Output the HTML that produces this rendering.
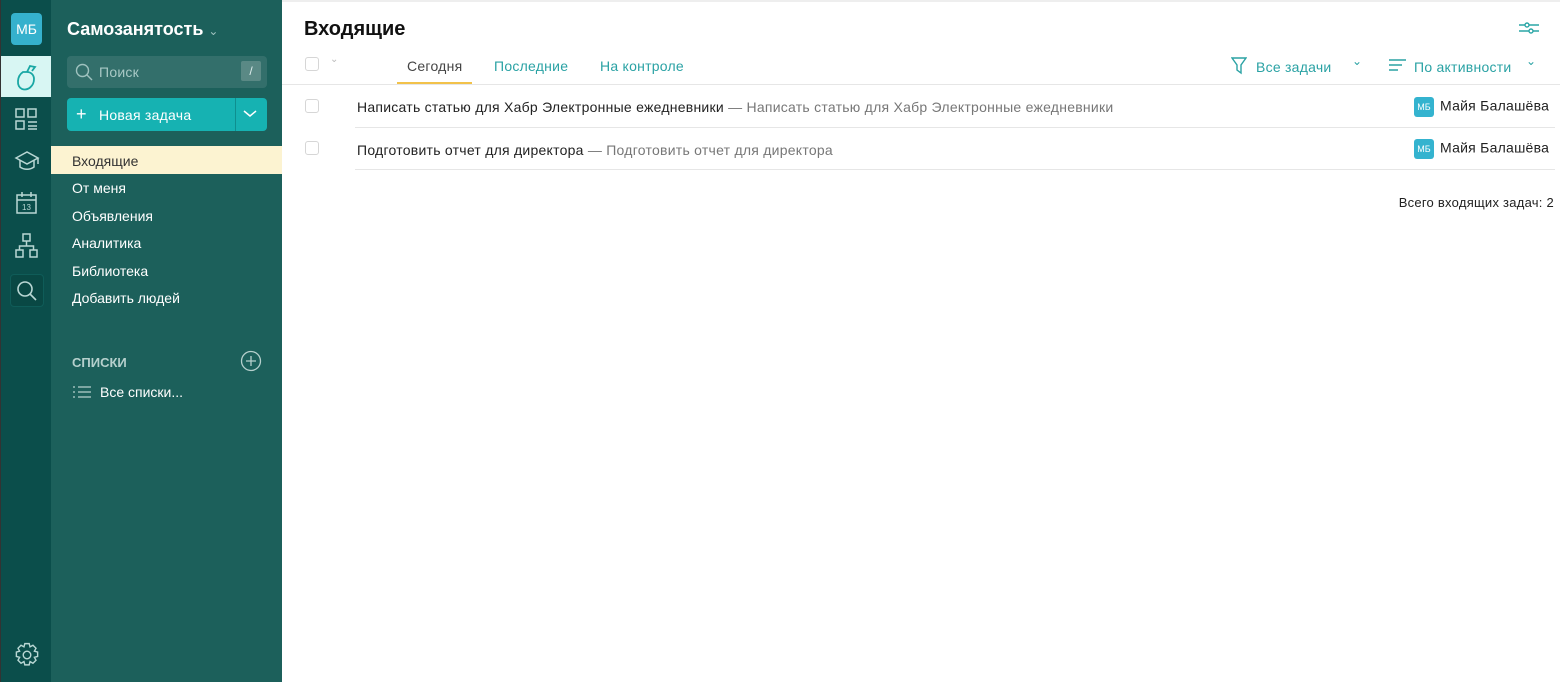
<!DOCTYPE html>
<html><head><meta charset="utf-8"><style>
*{margin:0;padding:0;box-sizing:border-box}
body{width:1560px;height:682px;overflow:hidden;font-family:"Liberation Sans","Noto Sans CJK SC",sans-serif;background:#fff;position:relative}
.rail{position:absolute;left:0;top:0;width:51px;height:682px;background:#0b4e4b;border-left:1px solid #333}
.panel{position:absolute;left:51px;top:0;width:231px;height:682px;background:#1c605b}
.ab{position:absolute}
.nav{position:absolute;left:21px;color:#fff;font-size:14px}
.main{position:absolute;left:282px;top:0;right:0;height:682px;border-top:2px solid #eee}
.cb{position:absolute;width:14px;height:14px;border:1px solid #d6d6d6;border-radius:3px}
.av{display:inline-block;width:20px;height:20px;background:#34b3cf;border-radius:3px;color:#fff;font-size:9px;text-align:center;line-height:20px;vertical-align:middle;margin-right:6px;letter-spacing:0}
.t{letter-spacing:0.25px}
</style></head><body>
<div class="rail">
 <div class="ab" style="left:10px;top:13px;width:31px;height:32px;background:#35b1cd;border-radius:4px;color:#fff;font-size:14px;text-align:center;line-height:32px">МБ</div>
 <div class="ab" style="left:0;top:56px;width:50px;height:41px;background:#d8f6f3"></div>
 <svg class="ab" style="left:13px;top:62px" width="26" height="30" viewBox="0 0 26 30" fill="none" stroke="#1aa7a4" stroke-width="1.8"><path d="M9 10 C3 14 2 24 8 27 C14 29 20 24 20 17 C20 13 17 10 13 10 Z"/><path d="M13 10 L16 4 L21 5 L18 9"/></svg>
 <svg class="ab" style="left:14px;top:108px" width="24" height="22" fill="none" stroke="#b9d7d4" stroke-width="1.5"><rect x="1" y="1" width="8" height="8"/><rect x="13" y="1" width="8" height="8"/><rect x="1" y="13" width="8" height="8"/><path d="M13 14h9M13 18h9M13 21h9"/></svg>
 <svg class="ab" style="left:13px;top:150px" width="26" height="22" fill="none" stroke="#b9d7d4" stroke-width="1.5"><path d="M2 8 L13 2 L24 8 L13 14 Z"/><path d="M6 10v7c4 3 10 3 14 0v-7"/><path d="M24 8v6"/></svg>
 <svg class="ab" style="left:14px;top:191px" width="24" height="24" fill="none" stroke="#b9d7d4" stroke-width="1.5"><rect x="2" y="4" width="19" height="18"/><path d="M2 9h19M7 1v5M16 1v5"/><text x="7" y="19" font-size="8" fill="#b9d7d4" stroke="none" font-family="Liberation Sans">13</text></svg>
 <svg class="ab" style="left:13px;top:233px" width="26" height="26" fill="none" stroke="#b9d7d4" stroke-width="1.5"><rect x="9" y="1" width="7" height="7"/><rect x="2" y="17" width="7" height="7"/><rect x="16" y="17" width="7" height="7"/><path d="M12.5 8v5M5.5 17v-4h14v4"/></svg>
 <div class="ab" style="left:9px;top:274px;width:34px;height:33px;border:1px solid #0f5c58;border-radius:4px;background:#094844"></div>
 <svg class="ab" style="left:15px;top:280px" width="22" height="22" fill="none" stroke="#b9d7d4" stroke-width="1.6"><circle cx="9" cy="9" r="7"/><path d="M14 14l6 6"/></svg>
 <svg class="ab" style="left:13px;top:642px" width="26" height="26" viewBox="0 0 24 24" fill="none" stroke="#b9d7d4" stroke-width="1.3"><circle cx="12" cy="12" r="3.5"/><path d="M10 1.5h4l.8 3 2.7-1.5 2.8 2.8-1.5 2.7 3 .8v4l-3 .8 1.5 2.7-2.8 2.8-2.7-1.5-.8 3h-4l-.8-3-2.7 1.5-2.8-2.8 1.5-2.7-3-.8v-4l3-.8-1.5-2.7 2.8-2.8 2.7 1.5z"/></svg>
</div>
<div class="panel">
 <div class="ab" style="left:16px;top:19px;color:#fff;font-size:18px;font-weight:bold">Самозанятость <span style="font-weight:normal;font-size:12px;color:#9fc2bf">&#8964;</span></div>
 <div class="ab" style="left:16px;top:56px;width:200px;height:32px;background:#336f6b;border-radius:4px"></div>
 <svg class="ab" style="left:24px;top:63px" width="18" height="18" fill="none" stroke="#9fc2bf" stroke-width="1.4"><circle cx="7.5" cy="7.5" r="6"/><path d="M12 12l5 5"/></svg>
 <div class="ab t" style="left:48px;top:64px;color:#a9c9c6;font-size:14px">Поиск</div>
 <div class="ab" style="left:190px;top:61px;width:20px;height:20px;background:#5a8985;border-radius:2px;color:#e0eeee;font-size:12px;text-align:center;line-height:20px">/</div>
 <div class="ab" style="left:16px;top:98px;width:200px;height:33px;background:#16b2b2;border-radius:4px"></div>
 <div class="ab" style="left:184px;top:98px;width:1px;height:33px;background:#0e8f8f"></div>
 <div class="ab" style="left:25px;top:104px;color:#fff;font-size:18px">+</div>
 <div class="ab t" style="left:48px;top:107px;color:#fff;font-size:14px">Новая задача</div>
 <svg class="ab" style="left:192px;top:110px" width="14" height="8" fill="none" stroke="#fff" stroke-width="1.5"><path d="M1 1l6 5 6-5"/></svg>
 <div class="ab" style="left:0;top:146px;width:231px;height:28px;background:#fcf3d1"></div>
 <div class="nav" style="top:153px;color:#333">Входящие</div>
 <div class="nav" style="top:180px">От меня</div>
 <div class="nav" style="top:208px">Объявления</div>
 <div class="nav" style="top:235px">Аналитика</div>
 <div class="nav" style="top:263px">Библиотека</div>
 <div class="nav" style="top:290px">Добавить людей</div>
 <div class="ab" style="left:21px;top:355px;color:#b6d0cd;font-size:13px;font-weight:bold">СПИСКИ</div>
 <svg class="ab" style="left:189px;top:350px" width="22" height="22" fill="none" stroke="#b6d0cd" stroke-width="1.3"><circle cx="11" cy="11" r="9.5"/><path d="M11 6v10M6 11h10"/></svg>
 <svg class="ab" style="left:22px;top:385px" width="20" height="14" fill="none" stroke="#b6d0cd" stroke-width="1.3"><path d="M0 2h2M0 7h2M0 12h2M5 2h13M5 7h13M5 12h13"/></svg>
 <div class="ab" style="left:49px;top:384px;color:#fff;font-size:14px">Все списки...</div>
</div>
<div class="main">
 <div class="ab" style="left:22px;top:16px;font-size:20px;font-weight:bold;color:#111">Входящие</div>
 <svg class="ab" style="left:1237px;top:18px" width="20" height="16" fill="none" stroke="#2aa6a6" stroke-width="1.4"><path d="M0 5h20M0 11h20"/><circle cx="8" cy="5" r="2" fill="#fff"/><circle cx="12" cy="11" r="2" fill="#fff"/></svg>
 <div class="cb" style="left:23px;top:55px"></div>
 <div class="ab" style="left:48px;top:52px;font-size:10px;color:#bbb">&#8964;</div>
 <div class="ab t" style="left:125px;top:56px;font-size:14px;color:#444">Сегодня</div>
 <div class="ab" style="left:115px;top:80px;width:75px;height:2px;background:#f2c24a"></div>
 <div class="ab t" style="left:212px;top:56px;font-size:14px;color:#2aa2a4">Последние</div>
 <div class="ab t" style="left:318px;top:56px;font-size:14px;color:#2aa2a4">На контроле</div>
 <svg class="ab" style="left:949px;top:55px" width="16" height="18" fill="none" stroke="#2aa2a4" stroke-width="1.4"><path d="M1 1h14l-5 7v8l-4-3v-5z"/></svg>
 <div class="ab t" style="left:974px;top:57px;font-size:14px;color:#2aa2a4">Все задачи</div>
 <div class="ab" style="left:1070px;top:52px;font-size:12px;color:#2aa2a4">&#8964;</div>
 <svg class="ab" style="left:1107px;top:57px" width="18" height="14" fill="none" stroke="#2aa2a4" stroke-width="1.4"><path d="M0 1h17M0 6h13M0 11h9"/></svg>
 <div class="ab t" style="left:1132px;top:57px;font-size:14px;color:#2aa2a4">По активности</div>
 <div class="ab" style="left:1244px;top:52px;font-size:12px;color:#2aa2a4">&#8964;</div>
 <div class="ab" style="left:0;top:82px;width:1278px;height:1px;background:#e6e6e6"></div>
 <div class="cb" style="left:23px;top:97px"></div>
 <div class="ab t" style="left:75px;top:97px;font-size:14px;color:#222">Написать статью для Хабр Электронные ежедневники <span style="color:#777">— Написать статью для Хабр Электронные ежедневники</span></div>
 <div class="ab t" style="left:1132px;top:95px;font-size:14px;color:#222"><span class="av">МБ</span>Майя Балашёва</div>
 <div class="ab" style="left:73px;top:125px;width:1200px;height:1px;background:#e6e6e6"></div>
 <div class="cb" style="left:23px;top:139px"></div>
 <div class="ab t" style="left:75px;top:140px;font-size:14px;color:#222">Подготовить отчет для директора <span style="color:#777">— Подготовить отчет для директора</span></div>
 <div class="ab t" style="left:1132px;top:137px;font-size:14px;color:#222"><span class="av">МБ</span>Майя Балашёва</div>
 <div class="ab" style="left:73px;top:167px;width:1200px;height:1px;background:#e6e6e6"></div>
 <div class="ab t" style="right:6px;top:193px;font-size:13px;color:#222">Всего входящих задач: 2</div>
</div>
</body></html>
